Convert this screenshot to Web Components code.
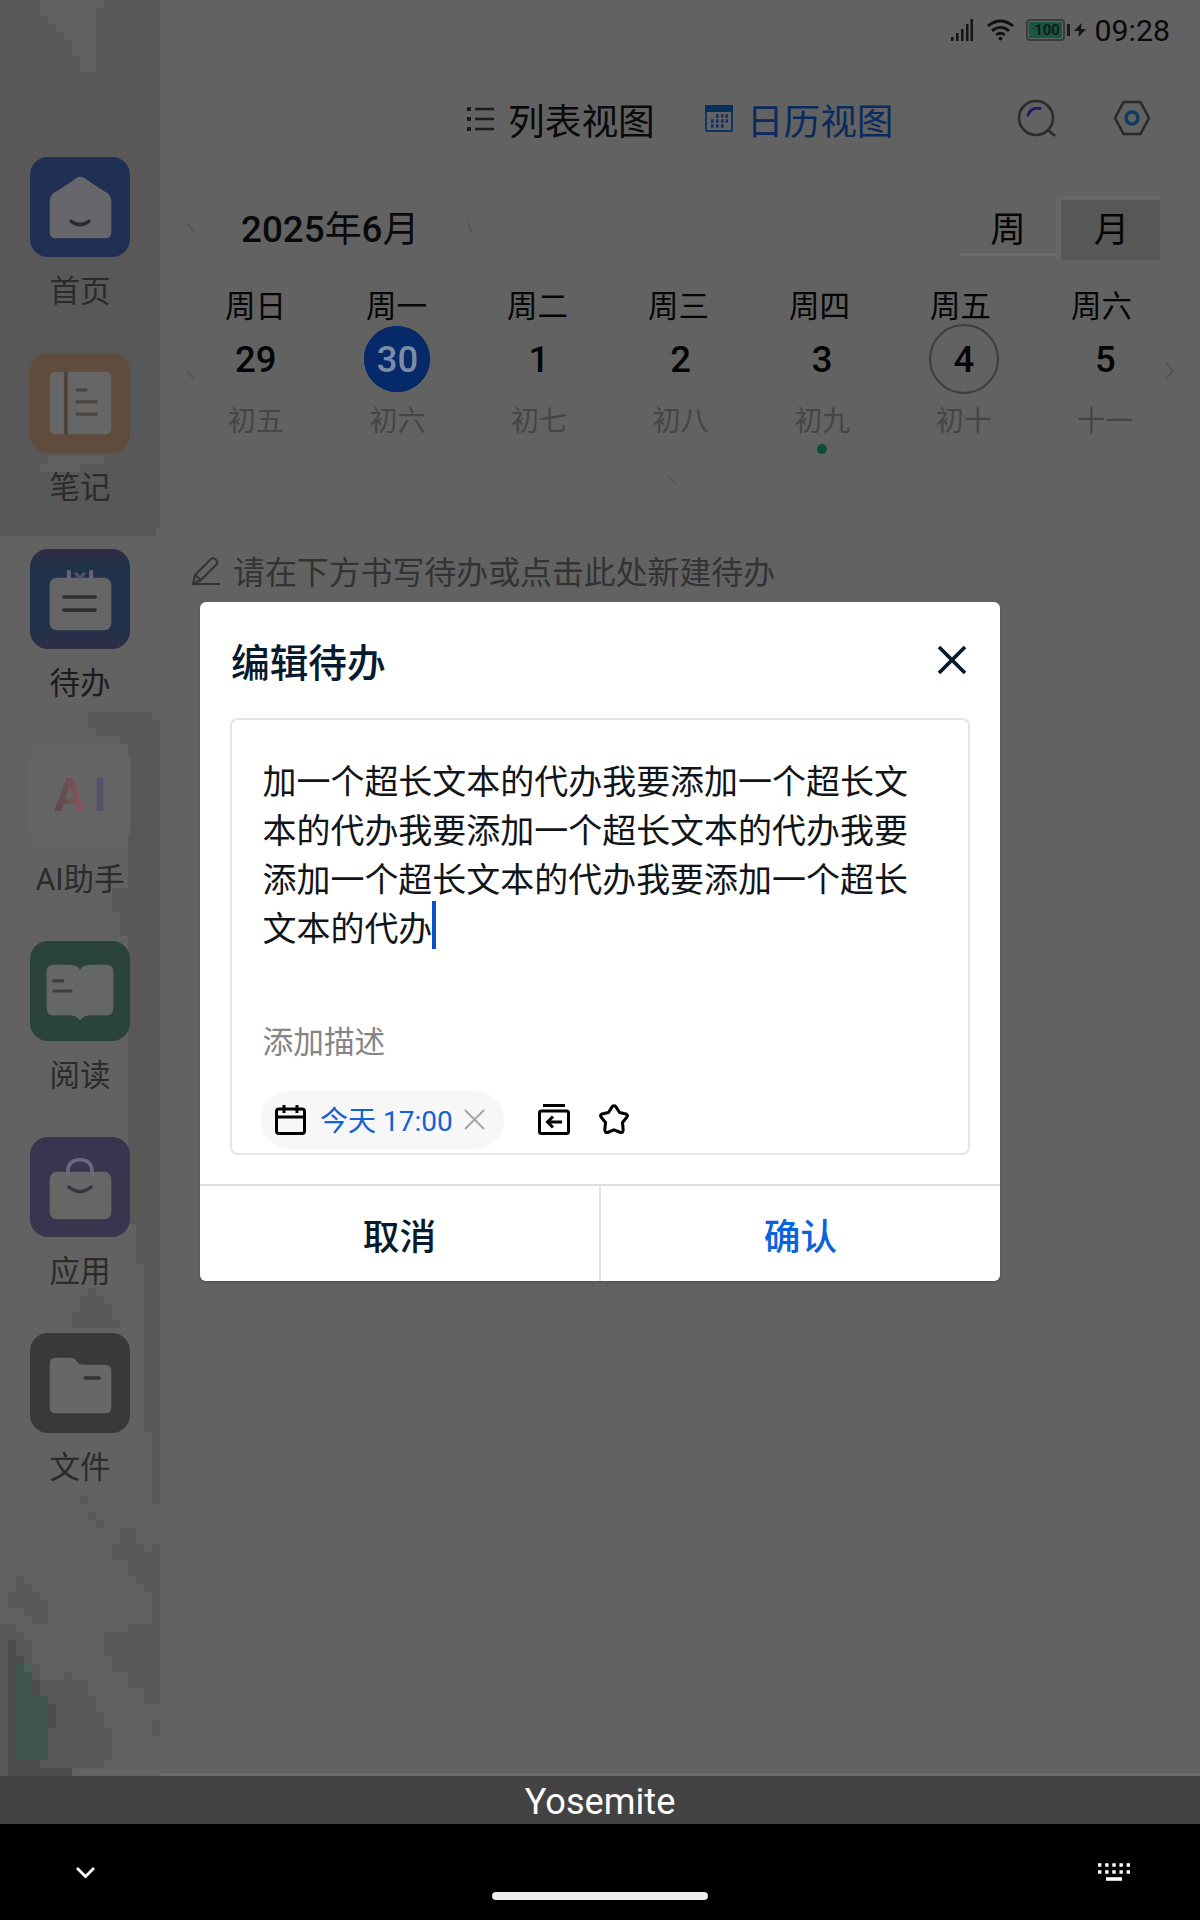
<!DOCTYPE html>
<html lang="zh-CN">
<head>
<meta charset="utf-8">
<title>待办</title>
<style>
html,body{margin:0;padding:0;background:#000}
body{width:1200px;height:1920px;overflow:hidden;font-family:Roboto,"Noto Sans CJK SC",sans-serif;color:#0a0a0a}
</style>
</head>
<body>
<todo-app></todo-app>
<script>
const define = (name, css, html) => customElements.define(name, class extends HTMLElement {
  constructor() {
    super();
    const root = this.attachShadow({ mode: 'open' });
    root.innerHTML = `<style>*{box-sizing:border-box}svg{display:block;overflow:visible}${css}</style>${typeof html === 'function' ? html(this) : html}`;
  }
});

const tiles = {
  home: ['#203054', '<path d="M49 19 Q53 19 57 23 L77 36 Q80 39 80 43 V74 Q80 80 74 80 H25 Q19 80 19 74 V43 Q19 39 22 36 L42 23 Q46 19 49 19Z" fill="#67666c"/><path d="M40 63 Q49 70 58 63" fill="none" stroke="#2a2a30" stroke-width="3.5" stroke-linecap="round"/>'],
  note: ['#5f4c3c', '<path d="M25 18H33V80H25Q19 80 19 74V24Q19 18 25 18Z" fill="#666"/><path d="M37 18H74Q80 18 80 24V74Q80 80 74 80H37Z" fill="#666"/><path d="M35 18V80" stroke="#4a413a" stroke-width="3"/><path d="M46 36H55M46 48H65M46 60H65" stroke="#4a4541" stroke-width="3.2" stroke-linecap="round"/>'],
  todo: ['linear-gradient(#302c45,#20334a 18%,#20334a 78%,#302c45)', '<rect x="19" y="28" width="61" height="52" rx="7" fill="#666"/><path d="M38 29V22M60 29V22" stroke="#66627c" stroke-width="4" stroke-linecap="round"/><path d="M44 23L49 28L54 23" fill="none" stroke="#55516c" stroke-width="3"/><path d="M33 47H64M33 60H64" stroke="#303033" stroke-width="3.5" stroke-linecap="round"/>'],
  read: ['#2b4439', '<path d="M23 23H38Q46 23 49 28Q52 23 60 23H75Q82 23 82 30V66Q82 73 75 73H60Q52 73 49 78Q46 73 38 73H23Q16 73 16 66V30Q16 23 23 23Z" fill="#656766"/><path d="M23 39H32M23 49H40" stroke="#3b3f3d" stroke-width="3.2" stroke-linecap="round"/>'],
  apps: ['#39354f', '<rect x="19" y="34" width="61" height="47" rx="7" fill="#666"/><path d="M37 38V34Q37 22 49 22Q61 22 61 34V38" fill="none" stroke="#6b6780" stroke-width="3.5"/><path d="M38 49Q49 58 60 49" fill="none" stroke="#363540" stroke-width="3.5" stroke-linecap="round"/>'],
  file: ['#393939', '<path d="M25 24H39Q44 24 46 28Q48 31 53 31H74Q80 31 80 37V73Q80 79 74 79H25Q19 79 19 73V30Q19 24 25 24Z" fill="#676767"/><path d="M54 44H68" stroke="#353535" stroke-width="3.5" stroke-linecap="round"/>']
};

define('side-item', `
:host{display:flex;flex-direction:column;align-items:center;height:196px;width:160px}
.tile{width:100px;height:100px;border-radius:18px;display:flex;align-items:center;justify-content:center}
.ai{background:#646464;box-shadow:0 0 2px #6d6d6d;letter-spacing:8px;font:700 46px/100px Roboto;padding-left:9px}
.ai span{background:linear-gradient(90deg,#554a4a,#86545c 45%,#555064 60%,#55526e 85%);background-clip:text;-webkit-background-clip:text;color:transparent}
.label{font-size:30.5px;line-height:44px;margin-top:13px;color:#2b2b2b;white-space:nowrap}
:host([on]) .label{color:#1c1c1c}
`, el => {
  const k = el.getAttribute('kind');
  const t = tiles[k];
  return (t ? `<div class="tile" style="background:${t[0]}"><svg width="100" height="100" viewBox="-0.5 -0.5 99 99">${t[1]}</svg></div>`
            : `<div class="tile ai"><span>AI</span></div>`) + `<div class="label"><slot></slot></div>`;
});

define('side-bar', `
:host{display:grid;width:160px;height:1776px;background:#626262}
:host>*{grid-area:1/1}
nav{display:flex;flex-direction:column;padding-top:157px}
`, `
<svg width="160" height="1776" shape-rendering="crispEdges">
<g fill="#585858">
<path d="M0 0H160V528H156V536H0Z"/>
<path d="M88 712H152V720H160V1504H152V1432H144V1264H136V1224H128V936H120V912H112V888H128V744H120V736H96V728H88Z"/>
<path d="M88 1288H96V1296H104V1304H112V1320H120V1328H72V1312H80V1296H88Z"/>
<path d="M80 1496h8v8h-8zM88 1512h8v8h-8zM96 1520h8v8h-8z"/>
<path d="M128 1528h8v16h8v8h8v-8h8v104h-8v-56h-8v-8h-8v-8h-8v-16h-16v-16h8v-16h8z"/>
<path d="M16 1576h8v8h8v8h8v8h8v24h-16v-8h-8v-8H8v-16h8z"/>
<path d="M128 1624h32v80h-16v-16h-16v-16h-16v-16h-8v-24h24z"/>
<path d="M152 1720h8v16h-8z"/>
<path d="M0 1624h16v8h8v8h8v24h8v16h24v-8h8v8h16v16h8v16h8v16h8v32h-8v8H72v8H0z"/>
</g>
<path d="M40 0H104V8H96V72H80V56H72V40H64V32H56V24H48V16H40ZM48 456H104V464H80V472H40V464H48Z" fill="#626262"/>
<path d="M8 1640h8v16h8v8h8v16h8v16h8v8h8v24h-8v32h-8v8h32v8H8z" fill="#4d4d4d"/>
<path d="M16 1664h16v32h16v64H16z" fill="#40564c"/>
<path d="M24 1664h8v8h-8z" fill="#4b6358"/>
<path d="M80 1771H160" stroke="#686868" stroke-width="3"/>
</svg>
<nav>
<side-item kind="home">首页</side-item>
<side-item kind="note">笔记</side-item>
<side-item kind="todo" on>待办</side-item>
<side-item kind="ai">AI助手</side-item>
<side-item kind="read">阅读</side-item>
<side-item kind="apps">应用</side-item>
<side-item kind="file">文件</side-item>
</nav>`);

define('status-bar', `
:host{display:flex;height:60px;padding-right:30px;justify-content:flex-end;align-items:center}
.time{font-size:30.300px;line-height:40px;margin-left:9px;color:#0a0a0a;padding-top:1px}
.bat{margin-left:12px;width:44px;height:23px;display:flex;align-items:center}
.cell{width:39px;height:22px;border:2px solid #3c3c3c;border-radius:4px;padding:1px}
.fill{background:#17583f;height:16px;border-radius:1px;font:700 15px/17px Roboto;color:#151a18;text-align:right;padding-right:2px;letter-spacing:-.2px}
.tip{width:3px;height:12px;margin-left:2px;background:#1c1c1c}
.wifi{margin-left:13px}
`, `
<svg width="24" height="22"><path d="M1 22V18H3.5V22ZM6 22V14H8.500V22ZM11 22V10H13.500V22ZM16 22V5H18.500V22ZM20.500 22V0H23V22Z" fill="#151515"/></svg>
<svg class="wifi" width="27" height="22" fill="none" stroke="#111" stroke-width="2.800"><path d="M1 7Q13.500 -3 26 7M5 11.800Q13.500 5 22 11.800M9.200 16Q13.500 12.500 17.800 16"/><circle cx="13.500" cy="19.500" r="1.500" fill="#111" stroke-width="1"/></svg>
<div class="bat"><div class="cell"><div class="fill">100</div></div><div class="tip"></div></div>
<svg width="12" height="14" style="margin-left:4px"><path d="M7.500 0L0 8H5L4.500 14L12 6H7Z" fill="#161616"/></svg>
<div class="time">09:28</div>`);

define('view-tabs', `
:host{display:flex;height:120px;align-items:center;padding-left:307px;font-size:36.700px;line-height:52px}
.t{white-space:nowrap;padding-top:5px}
.blue{color:#0b2a5e}
`, `
<svg width="28" height="26" stroke="#1b1b1b" stroke-width="2.600" style="margin-top:-3px"><path d="M8 3H27M8 13H27M8 23H27"/><path d="M0 3H4M0 13H4M0 23H4" stroke-width="4"/></svg>
<div class="t" style="margin-left:13px">列表视图</div>
<svg width="28" height="28" style="margin-left:50px;margin-top:-2px"><rect x="1" y="1" width="26" height="25" rx="1" fill="none" stroke="#10365f" stroke-width="2"/><path d="M0 0H28V7H0Z" fill="#06305e"/><path d="M16 11h2.500M20.500 11h2.500M11 11h2.500M6 16h2.500M11 16h2.500M16 16h2.500M20.500 16h2.500M6 21h2.500M11 21h2.500M16 21h2.500" stroke="#122c70" stroke-width="3.500"/></svg>
<div class="t blue" style="margin-left:14px">日历视图</div>
<svg width="38" height="38" fill="none" style="margin-left:124px;margin-top:-2px"><circle cx="18" cy="18" r="17" stroke="#2c2c2c" stroke-width="2.600"/><path d="M30 30L37 36" stroke="#2c2c2c" stroke-width="2.800"/><path d="M10 15Q13 7 22 8.500" stroke="#221b6b" stroke-width="3" stroke-linecap="round"/></svg>
<svg width="36" height="36" fill="none" style="margin-left:58px;margin-top:-4px"><path d="M9.500 2H26.500L35 18L26.500 34H9.500L1 18Z" stroke="#2a2a2a" stroke-width="2.600" stroke-linejoin="round"/><circle cx="18" cy="18" r="6" stroke="#133a63" stroke-width="3.600"/></svg>`);

define('month-row', `
:host{display:flex;height:96px;align-items:center;padding:0 40px 0 26px;font-size:35.500px;line-height:52px}
.m{font-weight:500;margin-left:46px;width:178px;white-space:nowrap;font-size:36.800px;padding-top:3px}
.m span{font-weight:400}
.seg{margin-left:auto;display:flex;height:64px}
.seg div{width:96px;text-align:center;line-height:69px;border-bottom:3px solid #6b6b6b;height:60px;color:#050505}
.seg .on{width:104px;background:#575757;height:64px;border:0;border-left:5px solid #666;border-top:4px solid #686868;line-height:61px;padding-left:2px}
`, `
<svg width="9" height="16" stroke="#555" stroke-width="1.500"><path d="M1 3L8 13"/></svg>
<div class="m">2025<span>年</span>6<span>月</span></div>
<svg width="6" height="12" stroke="#525252" stroke-width="1.800" style="margin-left:48px"><path d="M1 1L5 10"/></svg>
<div class="seg"><div>周</div><div class="on">月</div></div>`);

define('day-cell', `
:host{display:flex;flex-direction:column;align-items:center}
.n{width:70px;height:70px;border-radius:50%;border:2px solid transparent;display:flex;align-items:center;justify-content:center;font-weight:500;font-size:36.500px;line-height:44px;color:#050505;padding-top:2px}
:host([today]) .n{background:#06296a;background-clip:padding-box;color:#7d8ba6;box-shadow:inset 0 0 0 1px #06296a}
:host([ring]) .n{border-color:#3d3d3d}
.l{font-size:28px;line-height:40px;margin-top:8px;color:#454545}
i{width:10px;height:10px;border-radius:50%;margin-top:2px}
:host([mark]) i{background:#0c4d38}
`, el => `<div class="n">${el.getAttribute('n')}</div><div class="l"><slot></slot></div><i></i>`);

define('week-grid', `
:host{display:flex;flex-direction:column}
.w{display:grid;grid-template-columns:repeat(7,141px);padding-left:25px;text-align:center;font-size:30.500px;line-height:53px;height:48px;color:#050505}
.d{display:flex;margin-top:-4px;padding-left:26px}
.g{display:grid;grid-template-columns:repeat(7,141.600px);margin-left:-10px}
.d svg{margin-top:43px}
.x{display:flex;justify-content:center;padding-right:14px;padding-top:21px}
`, `
<div class="w"><span>周日</span><span>周一</span><span>周二</span><span>周三</span><span>周四</span><span>周五</span><span>周六</span></div>
<div class="d"><svg width="9" height="16" stroke="#555" stroke-width="1.500"><path d="M1 3L8 13"/></svg>
<div class="g"><day-cell n="29">初五</day-cell><day-cell n="30" today>初六</day-cell><day-cell n="1">初七</day-cell><day-cell n="2">初八</day-cell><day-cell n="3" mark>初九</day-cell><day-cell n="4" ring>初十</day-cell><day-cell n="5">十一</day-cell></div>
<svg width="10" height="18" fill="none" stroke="#525252" stroke-width="1.500" style="margin-left:-12px;margin-top:38px"><path d="M2 1L9 9L2 17"/></svg></div>
<div class="x"><svg width="10" height="12" stroke="#555" stroke-width="1.500"><path d="M0 1L9 10"/></svg></div>`);

define('new-hint', `
:host{display:flex;align-items:center;padding-left:32px;height:56px;font-size:31.900px;line-height:48px;color:#333;white-space:nowrap}
svg{margin-right:13px;margin-top:-5px}
`, `<svg width="28" height="28" fill="none" stroke="#333" stroke-width="2"><path d="M1 27L3 18L19 2Q22 0 25 4Q26 6 24 8L9 23Z M3 18L9 23M1 27H28"/></svg><slot></slot>`);

define('edit-dialog', `
:host{display:flex;flex-direction:column;width:800px;height:679px;background:#fff;border-radius:6px;color:#0a1428;box-shadow:0 1px 3px #4448}
header{display:flex;justify-content:space-between;align-items:center;height:116px;padding:2px 34px 0 31px;font-size:38.700px;font-weight:500;line-height:56px;color:#071a2e}
header span{padding-top:5px}
header svg{margin-top:-2px}
.box{margin:0 30px;height:437px;border:2px solid #e4e4e4;border-radius:8px;padding:38px 30px 0 30.500px;display:flex;flex-direction:column}
.txt{font-size:33.980px;line-height:49px;height:245px;white-space:nowrap;color:#111418}
.line{display:flex}
.caret{width:4px;height:48px;background:#0b50c4;margin-top:-4px}
.desc{font-size:30.700px;line-height:44px;color:#858585;margin-top:18px}
.tools{display:flex;align-items:center;margin:26px 0 0 -1.500px}
.chip{display:flex;align-items:center;width:243px;height:58px;border-radius:29px;background:#f7f7f7;padding-left:14px;font-size:28px;line-height:40px;color:#1262d6;white-space:nowrap}
.chip span{margin:0 11px 0 14px;padding-top:3px;width:134px}
.chip svg,.tools>svg{position:relative;top:-1px}
footer{display:flex;margin-top:auto;height:97px;border-top:2px solid #dedede;font-size:36.700px;font-weight:500}
footer div{flex:1;display:flex;align-items:center;justify-content:center;padding-top:9px;color:#071a2e;line-height:52px}
footer div+div{border-left:2px solid #e0e0e0;color:#0a62dc}
`, `
<header><span><slot name="title"></slot></span><svg width="28" height="28" stroke="#071a2e" stroke-width="3.800"><path d="M1 1L27 27M27 1L1 27"/></svg></header>
<div class="box">
<div class="txt"><div>加一个超长文本的代办我要添加一个超长文</div><div>本的代办我要添加一个超长文本的代办我要</div><div>添加一个超长文本的代办我要添加一个超长</div><div class="line">文本的代办<span class="caret"></span></div></div>
<div class="desc">添加描述</div>
<div class="tools">
<div class="chip"><svg width="31" height="31" fill="none" stroke="#000" stroke-width="3"><rect x="1.500" y="5" width="28" height="24.500" rx="2.500"/><path d="M1.500 13H29.500M9 1V9M22 1V9"/></svg><span>今天 17:00</span><svg width="19" height="19" stroke="#a6a6a6" stroke-width="2"><path d="M0 0L19 19M19 0L0 19"/></svg></div>
<svg width="32" height="31" fill="none" stroke="#000" stroke-width="3" style="margin-left:34px"><path d="M5 1.500H27"/><rect x="1.500" y="7" width="29" height="22.500" rx="2"/><path d="M9 18H24M15 12.500L9.500 18L15 23.500"/></svg>
<svg width="30" height="31" fill="none" stroke="#000" stroke-width="3" stroke-linejoin="round" style="margin-left:29px"><path d="M13.200 2.600Q15 .8 16.800 2.600L20.500 8.500L27 10Q29.300 11 28 13L23.500 18.500L24.200 26Q24 29 21.500 28.500L15 25.800L8.500 28.500Q6 29 5.800 26L6.500 18.500L2 13Q.7 11 3 10L9.500 8.500Z"/></svg>
</div></div>
<footer><div>取消</div><div>确认</div></footer>`);

define('ime-bar', `
:host{display:flex;flex-direction:column;height:144px;background:#000}
.s{height:48px;background:#434343;color:#fff;text-align:center;font-size:36.200px;line-height:52px}
.k{display:flex;justify-content:space-between;align-items:flex-start;height:96px;padding:0 70px 0 77px}
.bar{width:216px;height:8px;border-radius:4px;background:#ededed;margin-top:68px;margin-left:6px}
`, `
<div class="s"><slot></slot></div>
<div class="k"><svg width="19" height="11" fill="none" stroke="#fff" stroke-width="2.800" style="margin-top:43px"><path d="M0 1L8.500 9.500L17 1"/></svg><div class="bar"></div>
<svg width="32" height="18" stroke="#fff" stroke-width="3.400" style="margin-top:39px"><path d="M0 2H32M0 9H32" stroke-dasharray="3.400 3.750"/><path d="M8 16H24" stroke-width="3.600"/></svg></div>`);

define('todo-app', `
:host{display:flex;flex-direction:column;width:1200px;height:1920px;position:relative}
.top{display:flex;height:1776px;background:#626262}
main{flex:1;display:flex;flex-direction:column;border-bottom:3px solid #6d6d6d}
week-grid{margin-top:4px}
new-hint{margin-top:58px}
edit-dialog{position:absolute;left:200px;top:602px}
`, `
<div class="top"><side-bar></side-bar><main><status-bar></status-bar><view-tabs></view-tabs><month-row></month-row><week-grid></week-grid><new-hint>请在下方书写待办或点击此处新建待办</new-hint></main></div>
<ime-bar>Yosemite</ime-bar>
<edit-dialog><span slot="title">编辑待办</span></edit-dialog>`);
</script>
</body>
</html>
